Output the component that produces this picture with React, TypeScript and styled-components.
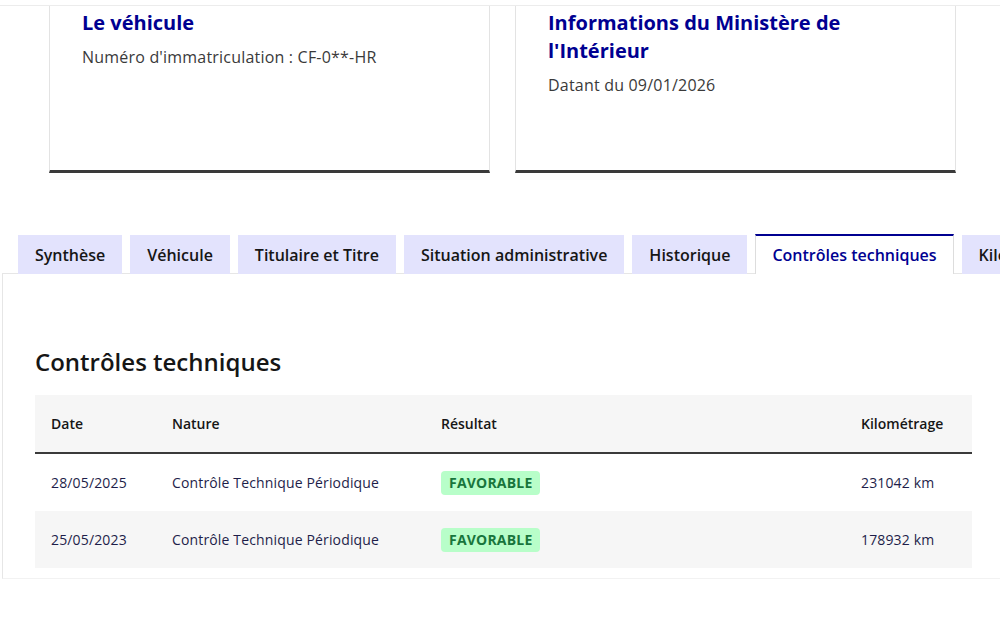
import React from "react";
import styled, { createGlobalStyle } from "styled-components";

const Global = createGlobalStyle`
  html, body {
    margin: 0;
    padding: 0;
    background: #ffffff;
    overflow: hidden;
  }
  body {
    font-family: "Open Sans", "Noto Sans", sans-serif;
    color: #161616;
    width: 1000px;
    height: 626px;
  }
`;

const Page = styled.div`
  padding-top: 5px;
  width: 1000px;
  height: 621px;
  overflow: hidden;
`;

const CardRow = styled.div`
  display: flex;
  gap: 25px;
  padding-left: 49px;
  border-top: 1px solid #ececec;
`;

const Card = styled.div`
  box-sizing: border-box;
  width: 441px;
  height: 167px;
  padding: 3px 32px 0;
  border: 1px solid #e3e3e3;
  border-top: none;
  border-bottom: 3px solid #3a3a3a;
  background: #fff;
`;

const CardTitle = styled.h3`
  margin: 0;
  font-size: 20px;
  line-height: 28px;
  font-weight: 700;
  color: #000091;
  max-width: 330px;
`;

const CardDesc = styled.p`
  margin: 8px 0 0;
  font-size: 16px;
  line-height: 24px;
  color: #3a3a3a;
  letter-spacing: 0.2px;
`;

const Tabs = styled.div`
  margin-top: 61px;
  margin-left: 2px;
  width: 1060px;
`;

const TabList = styled.div`
  display: flex;
  gap: 8px;
  padding-left: 16px;
  position: relative;
  z-index: 1;
`;

const Tab = styled.button<{ $active?: boolean }>`
  box-sizing: border-box;
  flex: none;
  padding: 0 16px 1px;
  border: none;
  margin-bottom: -1px;
  font-family: inherit;
  font-size: 16px;
  font-weight: 600;
  white-space: nowrap;
  color: ${(p) => (p.$active ? "#000091" : "#161616")};
  background: ${(p) => (p.$active ? "#ffffff" : "#e3e3fd")};
  border-top: 2px solid ${(p) => (p.$active ? "#000091" : "transparent")};
  border-left: 1px solid ${(p) => (p.$active ? "#dddddd" : "transparent")};
  border-right: 1px solid ${(p) => (p.$active ? "#dddddd" : "transparent")};
  height: ${(p) => (p.$active ? "40px" : "39px")};
  margin-top: ${(p) => (p.$active ? "0" : "1px")};
`;

const Panel = styled.section`
  box-sizing: border-box;
  width: 1001px;
  height: 306px;
  padding: 72px 32px 0;
  border: 1px solid #e6e6e6;
  border-bottom-color: #f2f2f2;
  background: #fff;
`;

const PanelTitle = styled.h2`
  margin: 0 0 17px;
  font-size: 24px;
  line-height: 32px;
  font-weight: 600;
  color: #161616;
`;

const Table = styled.table`
  width: 937px;
  border-collapse: collapse;
  table-layout: fixed;
  font-size: 14px;
`;

const HeadCell = styled.th`
  height: 57px;
  padding: 0 16px;
  text-align: left;
  font-weight: 600;
  color: #161616;
  background: #f6f6f6;
  border-bottom: 2px solid #3a3a3a;
`;

const Row = styled.tr<{ $alt?: boolean }>`
  background: ${(p) => (p.$alt ? "#f6f6f6" : "#ffffff")};
`;

const Cell = styled.td`
  height: 57px;
  padding: 0 16px;
  color: #1e1e4a;
  letter-spacing: 0.15px;
`;

const Badge = styled.span`
  display: inline-block;
  padding: 0 8px;
  height: 24px;
  line-height: 24px;
  border-radius: 4px;
  background: #b8fec9;
  color: #18753c;
  font-weight: 700;
  font-size: 14px;
  letter-spacing: 0.2px;
  text-transform: uppercase;
`;

const tabs = [
  "Synthèse",
  "Véhicule",
  "Titulaire et Titre",
  "Situation administrative",
  "Historique",
  "Contrôles techniques",
  "Kilométrage",
];

const controls = [
  { date: "28/05/2025", nature: "Contrôle Technique Périodique", result: "Favorable", km: "231042 km" },
  { date: "25/05/2023", nature: "Contrôle Technique Périodique", result: "Favorable", km: "178932 km" },
];

export default function App() {
  return (
    <>
      <Global />
      <Page>
        <CardRow>
          <Card>
            <CardTitle>Le véhicule</CardTitle>
            <CardDesc>Numéro d'immatriculation : CF-0**-HR</CardDesc>
          </Card>
          <Card>
            <CardTitle>Informations du Ministère de l'Intérieur</CardTitle>
            <CardDesc>Datant du 09/01/2026</CardDesc>
          </Card>
        </CardRow>

        <Tabs>
          <TabList>
            {tabs.map((t) => (
              <Tab key={t} $active={t === "Contrôles techniques"}>
                {t}
              </Tab>
            ))}
          </TabList>
          <Panel>
            <PanelTitle>Contrôles techniques</PanelTitle>
            <Table>
              <colgroup>
                <col style={{ width: 121 }} />
                <col style={{ width: 269 }} />
                <col style={{ width: 420 }} />
                <col style={{ width: 127 }} />
              </colgroup>
              <thead>
                <tr>
                  <HeadCell>Date</HeadCell>
                  <HeadCell>Nature</HeadCell>
                  <HeadCell>Résultat</HeadCell>
                  <HeadCell>Kilométrage</HeadCell>
                </tr>
              </thead>
              <tbody>
                {controls.map((c, i) => (
                  <Row key={c.date} $alt={i % 2 === 1}>
                    <Cell>{c.date}</Cell>
                    <Cell>{c.nature}</Cell>
                    <Cell>
                      <Badge>{c.result}</Badge>
                    </Cell>
                    <Cell>{c.km}</Cell>
                  </Row>
                ))}
              </tbody>
            </Table>
          </Panel>
        </Tabs>
      </Page>
    </>
  );
}
